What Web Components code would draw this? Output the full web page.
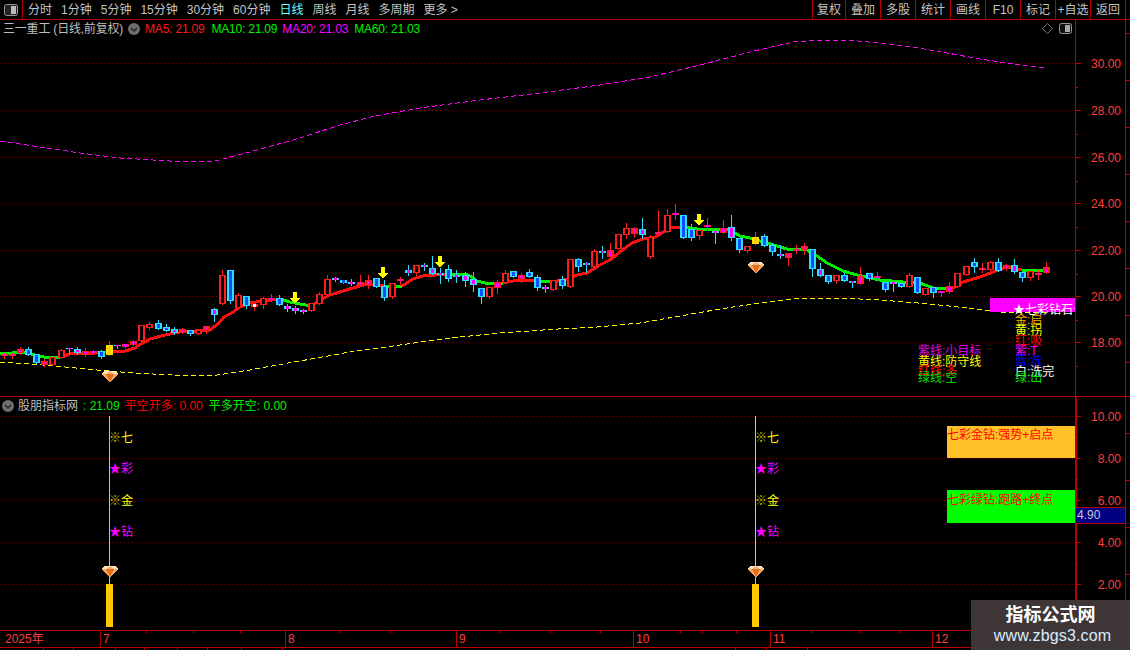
<!DOCTYPE html>
<html lang="zh-CN">
<head>
<meta charset="utf-8">
<title>三一重工</title>
<style>
  html, body { margin: 0; padding: 0; background: #000; overflow: hidden; }
  body { font: 12px/14px "Liberation Sans", "Noto Sans CJK SC", sans-serif; color: #c4c4c4; }
  .tight { letter-spacing: -.2px; }
</style>
</head>
<body>
<tdx-terminal>
  <tdx-toolbar>
    <span slot="periods">分时</span><span slot="periods">1分钟</span><span slot="periods">5分钟</span>
    <span slot="periods">15分钟</span><span slot="periods">30分钟</span><span slot="periods">60分钟</span>
    <span slot="periods" class="on">日线</span><span slot="periods">周线</span><span slot="periods">月线</span>
    <span slot="periods">多周期</span><span slot="periods">更多 &gt;</span>
    <tool-button width="33">复权</tool-button><tool-button>叠加</tool-button><tool-button>多股</tool-button>
    <tool-button>统计</tool-button><tool-button>画线</tool-button><tool-button>F10</tool-button>
    <tool-button>标记</tool-button><tool-button>+自选</tool-button><tool-button>返回</tool-button>
  </tdx-toolbar>

  <tdx-pane top="20" height="376">
    <pane-title slot="title" pad="3">
      <span class="tight">三一重工 (日线,前复权)</span><circle-chevron></circle-chevron>
      <span class="tight" style="color:#ff1818;margin-left:2px">MA5: 21.09</span>
      <span class="tight" style="color:#00f000;margin-left:4px">MA10: 21.09</span>
      <span class="tight" style="color:#ff00ff;margin-left:2px">MA20: 21.03</span>
      <span class="tight" style="color:#00f000;margin-left:3px">MA60: 21.03</span>
    </pane-title>
    <candle-chart></candle-chart>
    <pane-icons></pane-icons>
    <note-box x="990" y="298" w="85" h="14" color="#ff00ff" ink="#fff" pad="23" dy="5">★七彩钻石★</note-box>
    <chart-label x="1015" y="319" color="#ffb000">金:启</chart-label>
    <chart-label x="1015" y="330" color="#ffff00">黄:拐</chart-label>
    <chart-label x="1015" y="340" color="#ff0000">红:吸</chart-label>
    <chart-label x="1015" y="350" color="#ff00ff">紫:T</chart-label>
    <chart-label x="1015" y="360" color="#0000ff">蓝:洗</chart-label>
    <chart-label x="1015" y="371" color="#ffffff">白:洗完</chart-label>
    <chart-label x="1015" y="377" color="#00e000">绿:出</chart-label>
    <chart-label x="918" y="350" color="#e000e0">紫线:小目标</chart-label>
    <chart-label x="918" y="361" color="#ffff00">黄线:防守线</chart-label>
    <chart-label x="918" y="370" color="#ff0000">红线:多</chart-label>
    <chart-label x="918" y="377" color="#00e000">绿线:空</chart-label>
    <price-scale slot="scale" ticks="30.00@63,28.00@110,26.00@157,24.00@203,22.00@250,20.00@296,18.00@342"></price-scale>
  </tdx-pane>

  <tdx-pane top="397" height="233">
    <pane-title slot="title">
      <circle-chevron></circle-chevron>
      <span style="margin-left:1px">股朋指标网</span>
      <span style="color:#00f000;margin-left:2px">: 21.09</span>
      <span style="color:#ff0000;margin-left:2px">平空开多: 0.00</span>
      <span style="color:#00f000;margin-left:3px">平多开空: 0.00</span>
    </pane-title>
    <grid-lines ys="416,458,500,542,584"></grid-lines>
    <signal-mast x="109"></signal-mast>
    <signal-mast x="755"></signal-mast>
    <note-box x="947" y="426" w="128" h="32" color="#ffc028" ink="#ff0000" dy="2">七彩金钻:强势+启点</note-box>
    <note-box x="947" y="490" w="128" h="33" color="#00ff00" ink="#ff0000" dy="3">七彩绿钻:跑路+终点</note-box>
    <price-scale slot="scale" rail="2" ticks="10.00@416,8.00@458,6.00@500,4.00@542,2.00@584">
      <value-tag y="507">4.90</value-tag>
    </price-scale>
  </tdx-pane>

  <time-axis marks="7@100,8@285,9@456,10@633,11@770,12@932">2025年</time-axis>
  <status-strip stops="43,73,115,144,177,207,241,282,735,766,807"></status-strip>

  <water-mark>
    <b>指标公式网</b>
    <span>www.zbgs3.com</span>
  </water-mark>
</tdx-terminal>

<script>
const LINE = "#b80000";
const AXIS_INK = "#ff3c3c";
const GRID_INK = "#780000";

// candle data in screen pixels: [kind, bodyTop, bodyBottom, high, low]
// R hollow up, r up with magenta core, C down, c down with magenta core, Y limit-up, w white core
const CANDLES = [
  ["r",354,356,353,358],["r",354,356,353,358],["r",349,353,347,354],["C",349,355,347],["C",354,363],
  ["r",361,365,359,366],["R",357,365],["R",350,358,349],["c",348,349,348,353],["c",349,353,347,354],
  ["r",351,355,348,356],["r",351,353,350,353],["C",351,357,350,358],["Y",345,355,341],["c",345,346,345,348],
  ["r",344,347],["r",341,345,340],["R",325,341],["R",324,328,322,329],["C",323,329,320],
  ["C",327,331,324],["c",329,333,327,334],["r",329,333,328],["C",330,334,330,335],["R",330,334],
  ["r",326,330,326,333],["c",309,315,308,321],["R",275,304,270],["C",270,301,270,303],["R",295,308,293],
  ["C",296,306,296,308],["w",304,307,302,310],["R",298,305,297,308],["r",298,300,294,301],["C",298,305,295],
  ["c",306,309,304,311],["c",308,311,306,313],["c",310,312,309,313],["R",303,311],["R",294,304,292],
  ["R",279,295,275],["c",278,280,277,281],["C",280,283],["c",282,284,279,285],["r",282,285,275,286],
  ["r",280,285,275,288],["C",278,287],["C",286,298,280,300],["R",283,297,283,298],["r",279,281,277,285],
  ["c",270,273,265,275],["R",265,273,265,275],["c",265,267,263,270],["c",268,274,256,274],["c",273,275,268,283],
  ["C",269,279,265,281],["c",275,277,270,282],["c",275,281,272,286],["c",279,285,272,291],["C",288,297,288,303],
  ["R",287,297,287,298],["r",282,288,280,293],["R",273,283,270],["C",271,277],["r",275,279,273,282],
  ["C",272,277,269],["C",277,288,275,290],["c",287,289,285,292],["R",280,290],["C",279,286,276,288],
  ["R",259,287],["C",259,267,258,271],["c",263,265,262,272],["R",251,267,249],["c",251,253,246,258],
  ["r",250,257,243],["R",234,249],["R",228,235,223,238],["r",228,234,227,237],["c",229,235,218,238],
  ["R",237,257,235,258],["r",232,234,210,235],["R",215,232,209],["r",213,215,204,219],["C",215,238],
  ["C",229,238,224,240],["R",230,236,230,239],["r",225,227,218,230],["c",231,233,230,243],["r",228,233,220],
  ["c",227,238,215,240],["C",238,250,238,252],["R",246,251,246,252],["Y",237,244,232],["C",236,246,234],
  ["C",245,252,243,255],["c",254,256,245,258],["r",253,258,253,265],["r",249,251,245,253],["r",246,250,243,254],
  ["C",249,269,249,276],["c",269,276,263],["C",275,282,275,283],["R",275,281,275,283],["C",275,281,273],
  ["c",281,283,281,287],["r",276,284,267],["C",273,279,273,280],["r",276,278,272,279],["C",282,290,282,291],
  ["c",282,284,282,291],["C",283,287],["R",275,287,273],["C",277,293],["R",288,295],
  ["C",287,293,287,297],["r",291,293,291,296],["r",286,292,282,293],["R",273,287],["R",266,275],
  ["C",262,267,258,272],["r",268,270,263,272],["R",262,270,261],["C",262,271,258],["r",265,269,264,270],
  ["c",265,272,259,273],["C",272,278,272,281],["R",271,278,271,280],["r",273,275,270,279],["r",267,273,262]
];

const MA_SEGMENTS = [
  ["#00f000","0,354 25,352 35,355 44,357 60,357"],
  ["#ff1010","60,357 70,354 95,353 105,352 125,351 135,348 141,344 150,339 165,335 180,332 210,330 218,324 224,317 232,313 240,307 250,303 262,301 280,299"],
  ["#00f000","280,299 290,302 300,304 312,306"],
  ["#ff1010","312,306 320,300 330,295 343,291 353,288 367,284 380,285 385,286"],
  ["#00f000","385,286 402,286"],
  ["#ff1010","402,286 413,279 423,276 447,274"],
  ["#00f000","447,274 465,274 470,276 477,281 485,283 503,283"],
  ["#ff1010","503,283 513,281 533,280 540,281"],
  ["#00f000","540,281 553,282"],
  ["#ff1010","553,282 567,279 577,275 587,273 600,265 610,260 620,252 632,243 643,239 655,237 667,230 673,227 683,227"],
  ["#00f000","683,227 697,229 727,229 740,236 750,238 767,243 787,249 807,250 817,256 827,263 843,271 857,275 880,280 903,282 920,283 933,288 953,288"],
  ["#ff1010","953,288 963,282 980,277 993,272 1007,267 1017,269 1022,270"],
  ["#00f000","1022,270 1045,271"]
];

const MA_YELLOW = "0,362 43,365 65,367 97,370 133,373 173,375 217,375 250,370 277,365 300,361 350,352 400,345 450,338 500,333 558,329 597,327 640,323 680,316 720,309 760,303 800,298 840,298 880,300 930,304 977,309 1000,312 1046,313";
const MA_MAGENTA = "0,141 40,147 80,153 120,158 170,161 215,161 250,152 300,138 340,125 375,116 420,108 480,100 540,93 600,85 650,77 700,65 750,52 780,45 793,42 820,40 847,40 880,43 913,47 947,53 980,59 1013,64 1045,68";

const GEM = (x, y) => `
  <g transform="translate(${x - 8} ${y})">
    <polygon points="2,0 14,0 16,3 8,12 0,3" fill="#f2a860"/>
    <polygon points="2,0 14,0 16,3 0,3" fill="#ffe2b8"/>
    <polygon points="4,3 12,3 8,11" fill="#e8701a"/>
    <polygon points="6,1 10,1 11,3 5,3" fill="#f4b070"/>
  </g>`;

const ARROW = (x, y) => `<polygon points="${x - 2},${y} ${x + 2},${y} ${x + 2},${y + 6} ${x + 5},${y + 6} ${x},${y + 12} ${x - 5},${y + 6} ${x - 2},${y + 6}" fill="#ffff00"/>`;

function candleMarkup(row, i) {
  const [kind, top, bottom, high = top, low = bottom] = row;
  const x = Math.round(4 + 8.08 * i);
  const looks = {
    R: ["#ff1c1c", "#000"], r: ["#ff1c1c", "#ff00ff"], C: ["#30dcff", "#0a50ff"],
    c: ["#30dcff", "#ff00ff"], Y: ["#ffe000", "#ffd000"], w: ["#ff1c1c", "#fff"]
  };
  const [edge, core] = looks[kind];
  const wickInk = kind === "Y" ? "#ff1c1c" : edge;
  const h = bottom - top;
  const inner = h <= 3
    ? `<rect x="${x - 1}" y="${top}" width="3" height="${h || 1}" fill="${core}"/>`
    : `<rect x="${x - 1}" y="${top + 1}" width="3" height="${h - 2}" fill="${core}"/>`;
  return `<rect x="${x}" y="${high}" width="1" height="${low - high + 1}" fill="${wickInk}"/>
    <rect x="${x - 3}" y="${top}" width="7" height="${h || 1}" fill="${edge}"/>${inner}`;
}

class TdxTerminal extends HTMLElement {
  connectedCallback() {
    this.attachShadow({ mode: "open" }).innerHTML = `
      <style>
        :host { display: flex; flex-direction: column; position: relative; width: 1130px; height: 650px; overflow: hidden; background: #000; }
      </style>
      <slot></slot>`;
  }
}

class TdxToolbar extends HTMLElement {
  connectedCallback() {
    this.attachShadow({ mode: "open" }).innerHTML = `
      <style>
        :host { display: flex; height: 19px; border-bottom: 1px solid ${LINE}; color: #c4c4c4; }
        .panel { width: 23px; flex: none; box-sizing: border-box; border-right: 1px solid ${LINE}; display: flex; align-items: center; justify-content: center; }
        .periods { display: flex; gap: 9px; margin-left: 5px; align-items: center; }
        ::slotted(.on) { color: #66ffff; }
        .tools { display: flex; margin-left: auto; margin-right: 4px; border-right: 1px solid ${LINE}; height: 100%; }
      </style>
      <div class="panel">
        <svg width="14" height="12"><rect x=".5" y=".5" width="13" height="11" rx="2" fill="#222" stroke="#999"/><rect x="7" y="2" width="5" height="8" fill="#bbb"/></svg>
      </div>
      <div class="periods"><slot name="periods"></slot></div>
      <div class="tools"><slot></slot></div>`;
  }
}

class ToolButton extends HTMLElement {
  connectedCallback() {
    const width = this.getAttribute("width") || 35;
    this.attachShadow({ mode: "open" }).innerHTML = `
      <style>
        :host { display: flex; width: ${width}px; box-sizing: border-box; align-items: center; justify-content: center; border-left: 1px solid ${LINE}; white-space: nowrap; }
      </style>
      <slot></slot>`;
  }
}

class TdxPane extends HTMLElement {
  connectedCallback() {
    const top = this.getAttribute("top");
    const height = this.getAttribute("height");
    this.attachShadow({ mode: "open" }).innerHTML = `
      <style>
        :host { display: flex; flex: none; height: ${height}px; --pane-top: ${top}px; border-bottom: 1px solid ${LINE}; }
        .plot { position: relative; flex: none; width: 1075px; height: 100%; overflow: hidden; }
      </style>
      <div class="plot">
        <slot></slot>
        <slot name="title"></slot>
      </div>
      <slot name="scale"></slot>`;
  }
}

class PaneTitle extends HTMLElement {
  connectedCallback() {
    const pad = this.getAttribute("pad") || 0;
    this.attachShadow({ mode: "open" }).innerHTML = `
      <style>
        :host { position: relative; z-index: 2; display: flex; align-items: center; height: 18px; padding-left: ${pad}px; gap: 3px; white-space: nowrap; color: #bdbdbd; }
      </style>
      <slot></slot>`;
  }
}

class CircleChevron extends HTMLElement {
  connectedCallback() {
    this.attachShadow({ mode: "open" }).innerHTML = `
      <style>:host { display: inline-flex; width: 12px; height: 12px; margin-left: 2px; }</style>
      <svg width="12" height="12" viewBox="0 0 12 12">
        <circle cx="6" cy="6" r="6" fill="#6e6e6e"/>
        <path d="M3 5 L6 8 L9 5" fill="none" stroke="#222" stroke-width="1.4"/>
      </svg>`;
  }
}

class CandleChart extends HTMLElement {
  connectedCallback() {
    const ys = [63, 110, 157, 203, 250, 296, 342];
    const grid = ys.map(y => `<line x1="0" x2="1075" y1="${y}.5" y2="${y}.5" stroke="${GRID_INK}" stroke-dasharray="1 3"/>`).join("");
    const ma = MA_SEGMENTS.map(([ink, pts]) => `<polyline points="${pts}" fill="none" stroke="${ink}" stroke-width="3"/>`).join("");
    const bars = CANDLES.map(candleMarkup).join("");
    const arrows = [[295, 292], [383, 267], [440, 256], [699, 214]].map(a => ARROW(...a)).join("");
    this.attachShadow({ mode: "open" }).innerHTML = `
      <style>
        :host { position: absolute; inset: 0; display: block; }
        svg { display: block; }
      </style>
      <svg width="1075" height="376" viewBox="0 20 1075 376" shape-rendering="crispEdges">
        ${grid}
        <polyline points="${MA_MAGENTA}" fill="none" stroke="#ff00ff" stroke-dasharray="5 3"/>
        <polyline points="${MA_YELLOW}" fill="none" stroke="#ffff00" stroke-dasharray="5 3"/>
        ${ma}
        ${bars}
        ${arrows}
        ${GEM(110, 371)}
        ${GEM(756, 262)}
      </svg>`;
  }
}

class PaneIcons extends HTMLElement {
  connectedCallback() {
    this.attachShadow({ mode: "open" }).innerHTML = `
      <style>:host { position: absolute; right: 3px; top: 3px; display: flex; gap: 6px; align-items: center; z-index: 3; }</style>
      <svg width="11" height="11"><path d="M5.5 .5 L10.5 5.5 L5.5 10.5 L.5 5.5 Z" fill="none" stroke="#777"/></svg>
      <svg width="13" height="11"><rect x=".5" y=".5" width="12" height="10" rx="2" fill="#111" stroke="#999"/><rect x="6" y="2" width="5" height="7" fill="#aaa"/></svg>`;
  }
}

class GridLines extends HTMLElement {
  connectedCallback() {
    const rows = this.getAttribute("ys").split(",");
    const top = 397;
    this.attachShadow({ mode: "open" }).innerHTML = `
      <style>:host { position: absolute; inset: 0; display: block; }</style>
      <svg width="1075" height="233" shape-rendering="crispEdges">
        ${rows.map(y => `<line x1="0" x2="1075" y1="${y - top + 0.5}" y2="${y - top + 0.5}" stroke="${GRID_INK}" stroke-dasharray="1 3"/>`).join("")}
      </svg>`;
  }
}

class SignalMast extends HTMLElement {
  connectedCallback() {
    const x = +this.getAttribute("x");
    const top = 397;
    const marks = [
      ["※", "七", 438, "#c8c800", "#ffff00"],
      ["★", "彩", 469, "#ff00ff", "#ff00ff"],
      ["※", "金", 501, "#c8c800", "#ffff00"],
      ["★", "钻", 532, "#ff00ff", "#ff00ff"]
    ];
    const rows = marks.map(([sign, word, y, signInk, wordInk]) => `
      <div class="mark" style="top:${y - 7 - top}px;left:${x}px">
        <span class="sign" style="color:${signInk}">${sign}</span><span style="color:${wordInk}">${word}</span>
      </div>`).join("");
    this.attachShadow({ mode: "open" }).innerHTML = `
      <style>
        :host { position: absolute; inset: 0; display: block; }
        svg { position: absolute; left: 0; top: 0; }
        .mark { position: absolute; white-space: nowrap; line-height: 14px; }
        .sign { font-weight: bold; }
      </style>
      <svg width="1075" height="233" viewBox="0 397 1075 233" shape-rendering="crispEdges">
        <rect x="${x}" y="416" width="1" height="169" fill="#ffc800"/>
        <rect x="${x - 3}" y="584" width="7" height="43" fill="#ffc800"/>
        ${GEM(x + 1, 566)}
      </svg>
      ${rows}`;
  }
}

class NoteBox extends HTMLElement {
  connectedCallback() {
    const [x, y, w, h] = ["x", "y", "w", "h"].map(k => this.getAttribute(k));
    const pad = this.getAttribute("pad") || 0;
    const dy = this.getAttribute("dy") || 0;
    this.attachShadow({ mode: "open" }).innerHTML = `
      <style>
        :host {
          position: absolute; left: ${x}px; top: calc(${y}px - var(--pane-top)); width: ${w}px; height: ${h}px;
          box-sizing: border-box; padding: ${dy}px 0 0 ${pad}px; white-space: nowrap;
          background: ${this.getAttribute("color")}; color: ${this.getAttribute("ink")};
        }
      </style>
      <slot></slot>`;
  }
}

class ChartLabel extends HTMLElement {
  connectedCallback() {
    const x = this.getAttribute("x");
    const y = this.getAttribute("y");
    this.attachShadow({ mode: "open" }).innerHTML = `
      <style>
        :host {
          position: absolute; left: ${x}px; top: calc(${y - 6}px - var(--pane-top));
          white-space: nowrap; line-height: 14px; color: ${this.getAttribute("color")};
        }
      </style>
      <slot></slot>`;
  }
}

class PriceScale extends HTMLElement {
  connectedCallback() {
    const ticks = this.getAttribute("ticks").split(",").map(t => t.split("@"));
    const rail = this.getAttribute("rail") || 1;
    const gap = ticks[1][1] - ticks[0][1];
    const rows = ticks.map(([label, y]) => `
      <i class="major" style="top:calc(${y}px - var(--pane-top))"></i>
      <i class="minor" style="top:calc(${+y + gap / 2}px - var(--pane-top))"></i>
      <span class="num" style="top:calc(${y - 6}px - var(--pane-top))">${label}</span>`).join("");
    const sideTicks = [];
    for (let y = +ticks[0][1] - 30; y < +ticks[0][1] + gap * ticks.length; y += 47) {
      sideTicks.push(`<i class="side" style="top:calc(${y}px - var(--pane-top))"></i>`);
    }
    this.attachShadow({ mode: "open" }).innerHTML = `
      <style>
        :host { position: relative; display: block; flex: none; width: 55px; height: 100%; color: ${AXIS_INK}; overflow: hidden; }
        .rail { position: absolute; left: 0; top: 0; bottom: 0; width: 51px; box-sizing: border-box; border-left: ${rail}px solid ${LINE}; border-right: 1px solid ${LINE}; }
        i { position: absolute; height: 1px; background: ${LINE}; }
        .major { left: 1px; width: 5px; }
        .minor { left: 1px; width: 2px; }
        .side { left: 51px; width: 4px; }
        .num { position: absolute; right: 9px; line-height: 14px; }
      </style>
      <div class="rail"></div>
      ${rows}
      ${sideTicks.join("")}
      <slot></slot>`;
  }
}

class ValueTag extends HTMLElement {
  connectedCallback() {
    const y = this.getAttribute("y");
    this.attachShadow({ mode: "open" }).innerHTML = `
      <style>
        :host {
          position: absolute; left: 1px; top: calc(${y}px - var(--pane-top)); width: 50px; height: 17px; box-sizing: border-box;
          border: 1px solid ${LINE}; border-width: 1px 1px 1px 0; background: #000080; color: #c8c8d8; line-height: 15px; padding-left: 1px;
        }
      </style>
      <slot></slot>`;
  }
}

class TimeAxis extends HTMLElement {
  connectedCallback() {
    const marks = this.getAttribute("marks").split(",").map(m => m.split("@"));
    const minor = [146, 193, 240, 340, 390, 500, 550, 600, 680, 702, 736, 811, 860, 900, 985, 1040];
    this.attachShadow({ mode: "open" }).innerHTML = `
      <style>
        :host { position: relative; display: block; flex: none; height: 16px; border-bottom: 1px solid ${LINE}; color: ${AXIS_INK}; line-height: 16px; padding-left: 5px; }
        .month { position: absolute; top: 0; bottom: 0; border-left: 1px solid ${LINE}; padding-left: 2px; }
        .tick { position: absolute; top: 0; width: 1px; height: 2px; background: ${LINE}; }
      </style>
      <slot></slot>
      ${minor.map(x => `<i class="tick" style="left:${x}px"></i>`).join("")}
      ${marks.map(([label, x]) => `<span class="month" style="left:${x}px">${label}</span>`).join("")}`;
  }
}

class StatusStrip extends HTMLElement {
  connectedCallback() {
    const stops = this.getAttribute("stops").split(",");
    this.attachShadow({ mode: "open" }).innerHTML = `
      <style>
        :host { position: relative; display: block; flex: 1; }
        i { position: absolute; top: 0; bottom: 0; width: 1px; background: ${LINE}; }
      </style>
      ${stops.map(x => `<i style="left:${x}px"></i>`).join("")}`;
  }
}

class WaterMark extends HTMLElement {
  connectedCallback() {
    this.attachShadow({ mode: "open" }).innerHTML = `
      <style>
        :host {
          position: absolute; left: 971px; top: 600px; width: 159px; height: 50px; z-index: 5; box-sizing: border-box; padding-top: 4px;
          display: flex; flex-direction: column; align-items: center; background: #3e3636; color: #fff;
        }
        ::slotted(b) { font-size: 18px; line-height: 22px; }
        ::slotted(span) { font-size: 16px; line-height: 20px; color: #d8ecff; padding-left: 4px; letter-spacing: .15px; }
      </style>
      <slot></slot>`;
  }
}

customElements.define("tdx-terminal", TdxTerminal);
customElements.define("tdx-toolbar", TdxToolbar);
customElements.define("tool-button", ToolButton);
customElements.define("tdx-pane", TdxPane);
customElements.define("pane-title", PaneTitle);
customElements.define("circle-chevron", CircleChevron);
customElements.define("candle-chart", CandleChart);
customElements.define("pane-icons", PaneIcons);
customElements.define("grid-lines", GridLines);
customElements.define("signal-mast", SignalMast);
customElements.define("note-box", NoteBox);
customElements.define("chart-label", ChartLabel);
customElements.define("price-scale", PriceScale);
customElements.define("value-tag", ValueTag);
customElements.define("time-axis", TimeAxis);
customElements.define("status-strip", StatusStrip);
customElements.define("water-mark", WaterMark);
</script>
</body>
</html>
